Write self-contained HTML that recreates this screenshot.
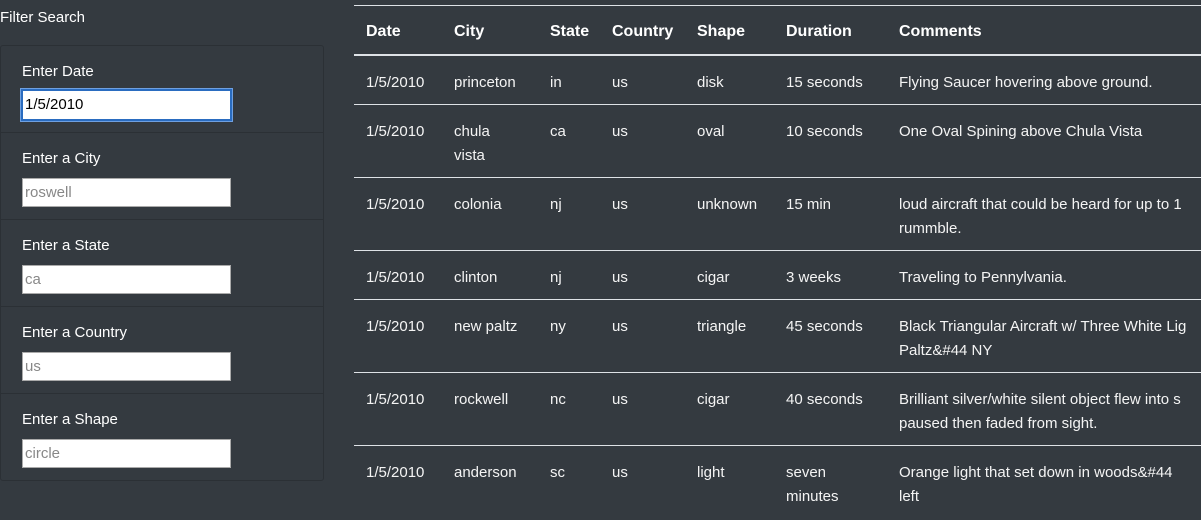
<!DOCTYPE html>
<html><head><style>
body{margin:0;width:1201px;height:520px;background:#343a40;overflow:hidden;font-family:"Liberation Sans",sans-serif;color:#fff;position:relative}
.fs{position:absolute;left:0;top:9px;font-size:15px}
.panel{position:absolute;left:0;top:45px;width:322px;height:434px;border:1px solid #2b3035;border-radius:3px}
.sec{height:86px;border-bottom:1px solid #2b3035;position:relative}
.sec:last-child{border-bottom:none}
.sec label{position:absolute;left:21px;top:17px;font-size:15px}
.sec .in{position:absolute;left:21px;top:45px;width:209px;height:29px;background:#fff;border:1px solid #aaa;color:#888;font-size:15px;line-height:28px;padding-left:2px;box-sizing:border-box}
.sec .in.f{left:20px;top:43px;width:211px;height:32px;border:2px solid #2a6cc0;color:#000;box-shadow:0 0 0 1px #6fa0e0;line-height:28px}
table{position:absolute;left:354px;top:5px;border-collapse:collapse;font-size:15px;width:900px}
th{text-align:left;font-weight:bold;font-size:16px;height:49px;border-top:1px solid #dee2e6;border-bottom:2px solid #dee2e6;padding:4px 0 0 12px;box-sizing:border-box}
td{vertical-align:top;padding:15px 0 0 12px;border-bottom:1px solid #dee2e6;line-height:24px;color:#f4f4f4}
tr.s td{height:33px}tr.d td{height:57px}
tr:last-child td{border-bottom:none}
</style></head><body>
<div class="fs">Filter Search</div>
<div class="panel">
<div class="sec"><label>Enter Date</label><div class="in f">1/5/2010</div></div>
<div class="sec"><label>Enter a City</label><div class="in">roswell</div></div>
<div class="sec"><label>Enter a State</label><div class="in">ca</div></div>
<div class="sec"><label>Enter a Country</label><div class="in">us</div></div>
<div class="sec"><label>Enter a Shape</label><div class="in">circle</div></div>
</div>
<table>
<colgroup><col style="width:88px"><col style="width:96px"><col style="width:62px"><col style="width:85px"><col style="width:89px"><col style="width:113px"><col></colgroup>
<tr><th>Date</th><th>City</th><th>State</th><th>Country</th><th>Shape</th><th>Duration</th><th>Comments</th></tr>
<tr class="s"><td>1/5/2010</td><td>princeton</td><td>in</td><td>us</td><td>disk</td><td>15 seconds</td><td>Flying Saucer hovering above ground.</td></tr>
<tr class="d"><td>1/5/2010</td><td>chula<br>vista</td><td>ca</td><td>us</td><td>oval</td><td>10 seconds</td><td>One Oval Spining above Chula Vista</td></tr>
<tr class="d"><td>1/5/2010</td><td>colonia</td><td>nj</td><td>us</td><td>unknown</td><td>15 min</td><td>loud aircraft that could be heard for up to 1<br>rummble.</td></tr>
<tr class="s"><td>1/5/2010</td><td>clinton</td><td>nj</td><td>us</td><td>cigar</td><td>3 weeks</td><td>Traveling to Pennylvania.</td></tr>
<tr class="d"><td>1/5/2010</td><td>new paltz</td><td>ny</td><td>us</td><td>triangle</td><td>45 seconds</td><td>Black Triangular Aircraft w/ Three White Lig<br>Paltz&amp;#44 NY</td></tr>
<tr class="d"><td>1/5/2010</td><td>rockwell</td><td>nc</td><td>us</td><td>cigar</td><td>40 seconds</td><td>Brilliant silver/white silent object flew into s<br>paused then faded from sight.</td></tr>
<tr class="d"><td>1/5/2010</td><td>anderson</td><td>sc</td><td>us</td><td>light</td><td>seven<br>minutes</td><td>Orange light that set down in woods&amp;#44<br>left</td></tr>
</table>
</body></html>
